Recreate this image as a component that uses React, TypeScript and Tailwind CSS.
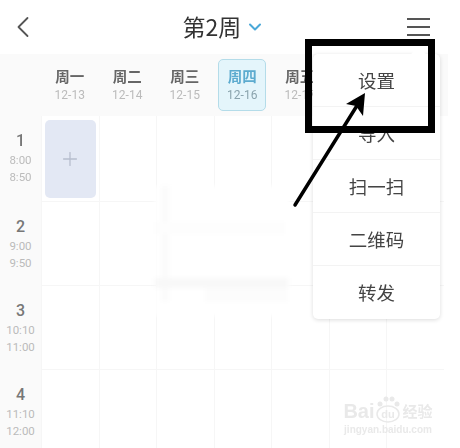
import { ChevronDown, ChevronLeft, Plus } from 'lucide-react'

const days = [
  ['周一', '12-13'],
  ['周二', '12-14'],
  ['周三', '12-15'],
  ['周四', '12-16'],
  ['周五', '12-17'],
]

const periods = [
  ['1', '8:00', '8:50'],
  ['2', '9:00', '9:50'],
  ['3', '10:10', '11:00'],
  ['4', '11:10', '12:00'],
]

const columns = [0, 1, 2, 3, 4, 5, 6]

const menu = ['设置', '导入', '扫一扫', '二维码', '转发']

export default function App() {
  return (
    <div className="relative h-[448px] w-[460px] overflow-hidden bg-white font-['Noto_Sans_CJK_SC','Noto_Sans',sans-serif]">
      <div className="w-[448px] blur-[0.5px]">
        <header className="relative flex h-[54px] items-center justify-center">
          <ChevronLeft className="absolute left-[5px] top-[9px] h-[36px] w-[36px] text-[#555]" strokeWidth={1.2} />
          <div className="flex items-center gap-[4px] pb-[2px]">
            <span className="text-[23px] leading-none text-[#333]">第2周</span>
            <ChevronDown className="mt-[2px] h-[20px] w-[20px] text-[#4aa8d8]" strokeWidth={2.4} />
          </div>
          <div className="absolute left-[407px] top-[18px] flex w-[23px] flex-col gap-[6px]">
            <div className="h-[2px] bg-[#555]" />
            <div className="h-[2px] bg-[#555]" />
            <div className="h-[2px] bg-[#555]" />
          </div>
        </header>

        <div className="flex h-[62px] items-center bg-[#fafafa] pl-[41px]">
          {days.map(([day, date]) => {
            const active = day === '周四'
            return (
              <div key={day} className="flex w-[57.5px] shrink-0 justify-center">
                <div
                  className={
                    active
                      ? 'flex h-[52px] w-[48px] flex-col items-center justify-center rounded-[5px] border border-[#b4dce9] bg-[#e4f5fb]'
                      : 'flex h-[52px] w-[48px] flex-col items-center justify-center'
                  }
                >
                  <span className={active ? 'text-[14.5px] font-bold leading-[20px] text-[#5cabcf]' : 'text-[14.5px] font-bold leading-[20px] text-[#666]'}>
                    {day}
                  </span>
                  <span className={active ? "font-['Roboto'] text-[12px] leading-[18px] text-[#8aa3ad]" : "font-['Roboto'] text-[12px] leading-[18px] text-[#bbb]"}>
                    {date}
                  </span>
                </div>
              </div>
            )
          })}
        </div>

        <div className="flex flex-col">
          {periods.map(([num, from, to], i) => (
            <div key={num} className={i === 0 ? 'flex h-[86px] shrink-0' : 'flex h-[84px] shrink-0'}>
              <div className="flex w-[41px] shrink-0 flex-col items-center bg-[#fafafa] pt-[15px] font-['Roboto']">
                <span className="text-[16px] font-medium leading-[20px] text-[#777]">{num}</span>
                <span className="text-[11.5px] leading-[18px] text-[#bbb]">{from}</span>
                <span className="text-[11.5px] leading-[17px] text-[#bbb]">{to}</span>
              </div>
              {columns.map((col) => (
                <div key={col} className="w-[57.5px] shrink-0 border-b border-l border-[#f6f6f6] p-[3px] pt-[4px]">
                  {i === 0 && col === 0 && (
                    <div className="flex h-[78px] items-center justify-center rounded-[5px] bg-[#e3e8f4] text-[#b7bdcd]">
                      <Plus className="h-[22px] w-[22px]" strokeWidth={1.4} />
                    </div>
                  )}
                </div>
              ))}
            </div>
          ))}
        </div>
      </div>

      {/* ghost of the erased tip in the source picture */}
      <div className="absolute left-[155px] top-[186px] h-[130px] w-[135px] bg-white blur-[2px]">
        <div className="absolute left-[6px] top-0 h-[115px] w-[8px] bg-[#fbfbfb]" />
        <div className="absolute left-0 top-[92px] h-[10px] w-[133px] bg-[#f8f8f8]" />
        <div className="absolute left-[50px] top-[102px] h-[14px] w-[83px] bg-[#fcfcfc]" />
        <div className="absolute left-0 top-[36px] h-[12px] w-[130px] bg-[#fdfdfd]" />
      </div>

      {/* popup menu */}
      <div className="absolute left-[313px] top-[54px] w-[127px] rounded-[5px] bg-white shadow-[0_1px_4px_rgba(0,0,0,0.14)] blur-[0.5px]">
        <div className="absolute left-[100px] top-[-5px] h-[11px] w-[11px] rotate-45 bg-white" />
        {menu.map((item, i) => (
          <div
            key={item}
            className={
              i < menu.length - 1
                ? 'relative flex h-[53px] items-center justify-center border-b border-[#f3f3f3] text-[18.5px] leading-none text-[#444]'
                : 'relative flex h-[53px] items-center justify-center text-[18.5px] leading-none text-[#444]'
            }
          >
            {item}
          </div>
        ))}
      </div>

      {/* hand drawn annotation */}
      <div className="absolute left-[305px] top-[39px] h-[94px] w-[130px] border-[7px] border-black" />
      <svg className="absolute left-0 top-0" width="460" height="448" viewBox="0 0 460 448" fill="none">
        <path d="M295 205 L358 104" stroke="#000" strokeWidth="3.5" strokeLinecap="round" />
        <path d="M365 93 L346 104 L356 106 L363 116 Z" fill="#000" />
      </svg>

      {/* watermark */}
      <div className="absolute left-[343px] top-[393px] flex w-[90px] flex-col items-center text-[#e9e9e9]">
        <div className="flex items-end">
          <span className="font-['Liberation_Sans'] text-[20px] font-bold leading-[24px]">Bai</span>
          <svg width="24" height="30" viewBox="0 0 24 30" className="mx-[1px]">
            <ellipse cx="12" cy="21" rx="11" ry="8" fill="none" stroke="#e9e9e9" strokeWidth="1.5" />
            <circle cx="4" cy="11" r="2.5" fill="#e9e9e9" />
            <circle cx="10" cy="6" r="2.5" fill="#e9e9e9" />
            <circle cx="16" cy="6" r="2.5" fill="#e9e9e9" />
            <circle cx="21" cy="11" r="2.5" fill="#e9e9e9" />
            <text x="12" y="25" textAnchor="middle" fontSize="11" fontWeight="700" fontFamily="Liberation Sans" fill="#e9e9e9">du</text>
          </svg>
          <span className="ml-[2px] text-[15px] font-bold leading-[24px]">经验</span>
        </div>
        <span className="font-['Liberation_Sans'] text-[10px] font-bold leading-[14px]">jingyan.baidu.com</span>
      </div>
    </div>
  )
}
